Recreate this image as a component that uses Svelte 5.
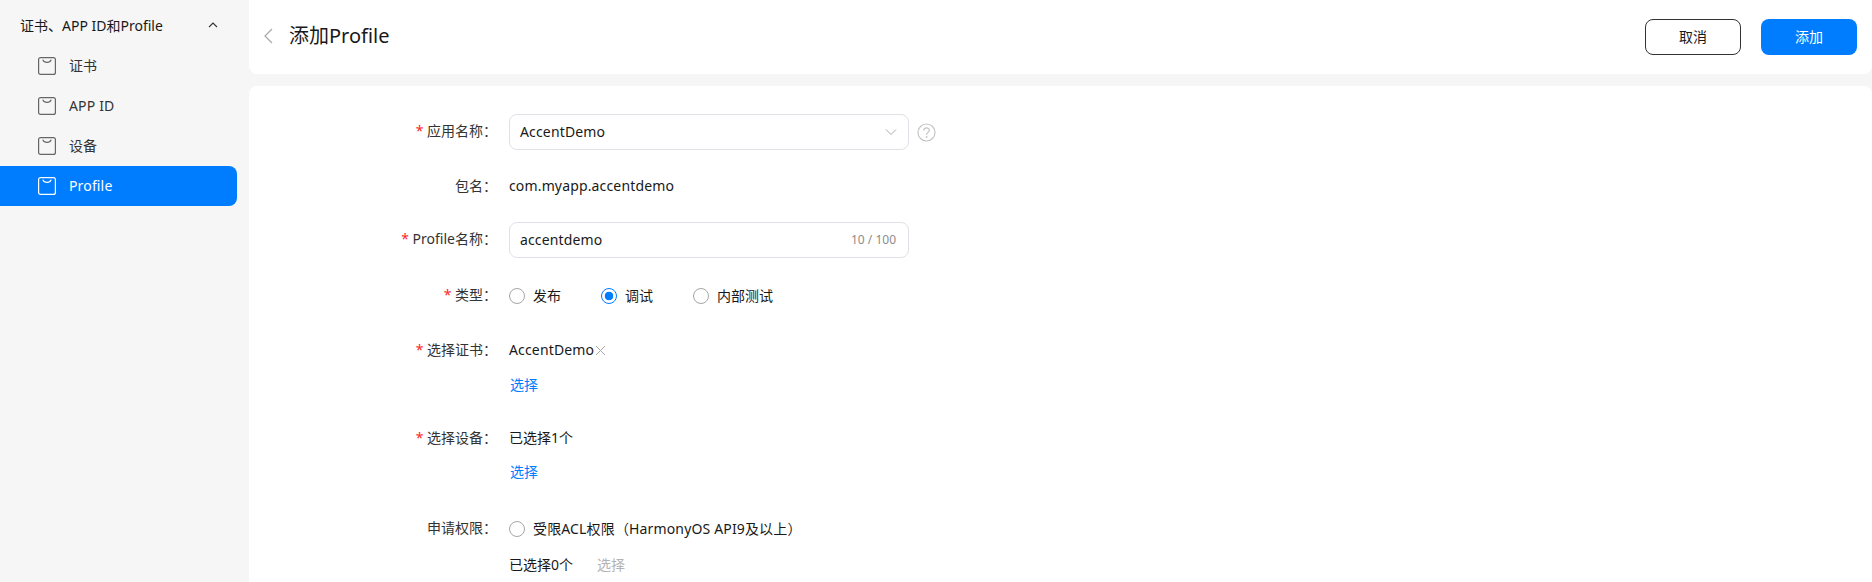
<script>
  const navItems = [
    { label: '证书' },
    { label: 'APP ID', latin: true },
    { label: '设备' },
    { label: 'Profile', active: true, latin: true }
  ];
</script>

<div class="page">
  <aside class="sidebar">
    <div class="group">
      <span>证书、APP ID和Profile</span>
      <svg class="caret" width="12" height="12" viewBox="0 0 12 12" fill="none"><path d="M2 8 6 4l4 4" stroke="#333" stroke-width="1.1"/></svg>
    </div>
    {#each navItems as item}
      <div class="nav" class:active={item.active}>
        <svg width="18" height="18" viewBox="0 0 18 18" fill="none">
          <rect x=".6" y=".6" width="16.8" height="16.8" rx="2" stroke="currentColor" class="box"/>
          <path d="M5 3c1 3.2 7 3.2 8 0" stroke="currentColor" stroke-width="1.1" stroke-linecap="round"/>
        </svg>
        <span class:latin={item.latin}>{item.label}</span>
      </div>
    {/each}
  </aside>

  <main class="main">
    <header class="head">
      <svg class="back" width="12" height="18" viewBox="0 0 12 18" fill="none"><path d="M10 2 3 9l7 7" stroke="#a8a8a8" stroke-width="1.2"/></svg>
      <h1>添加Profile</h1>
      <div class="spacer"></div>
      <button class="btn ghost">取消</button>
      <button class="btn primary">添加</button>
    </header>

    <section class="form">
      <div class="row r-select">
        <div class="label"><i>*</i> 应用名称：</div>
        <div class="field">
          <span class="latin">AccentDemo</span>
          <svg width="12" height="12" viewBox="0 0 12 12" fill="none"><path d="M1 3.5 6 8.5l5-5" stroke="#aaa" stroke-width="1"/></svg>
        </div>
        <svg class="help" width="19" height="19" viewBox="0 0 19 19" fill="none">
          <circle cx="9.5" cy="9.5" r="8.5" stroke="#c4c4c4" stroke-width="1.2"/>
          <path d="M6.9 7.4c0-3.3 5.4-3.3 5.4 0 0 2-2.7 2-2.7 4.3" stroke="#c4c4c4" stroke-width="1.2"/>
          <circle cx="9.6" cy="14" r=".9" fill="#c4c4c4"/>
        </svg>
      </div>

      <div class="row r-pkg">
        <div class="label">包名：</div>
        <div class="value latin">com.myapp.accentdemo</div>
      </div>

      <div class="row r-name">
        <div class="label"><i>*</i> Profile名称：</div>
        <div class="field">
          <span class="latin">accentdemo</span>
          <small>10 / 100</small>
        </div>
      </div>

      <div class="row r-type">
        <div class="label"><i>*</i> 类型：</div>
        <div class="radios">
          <label class="radio"><b></b>发布</label>
          <label class="radio on"><b></b>调试</label>
          <label class="radio"><b></b>内部测试</label>
        </div>
      </div>

      <div class="row r-cert">
        <div class="label"><i>*</i> 选择证书：</div>
        <div class="value"><span class="latin">AccentDemo</span><svg class="x" width="11" height="11" viewBox="0 0 11 11" fill="none"><path d="m1 1 9 9M10 1l-9 9" stroke="#a8a8a8"/></svg></div>
      </div>
      <div class="row sub"><div></div><a class="link" href="#a">选择</a></div>

      <div class="row r-dev">
        <div class="label"><i>*</i> 选择设备：</div>
        <div class="value">已选择1个</div>
      </div>
      <div class="row sub"><div></div><a class="link" href="#a">选择</a></div>

      <div class="row r-perm">
        <div class="label">申请权限：</div>
        <label class="radio"><b></b><span class="latin">受限ACL权限（HarmonyOS API9及以上）</span></label>
      </div>
      <div class="row sub2">
        <div></div>
        <div class="value">已选择0个<span class="muted">选择</span></div>
      </div>
    </section>
  </main>
</div>

<style>
  :global(body) {
    margin: 0;
    background: #f6f6f6;
  }
  .page {
    display: flex;
    height: 582px;
    overflow: hidden;
    background: #f6f6f6;
    color: #191919;
    font: 14px/24px "Noto Sans", "Noto Sans CJK SC", sans-serif;
  }
  .latin {
    letter-spacing: 0.15px;
  }
  .sidebar {
    flex: 0 0 237px;
    margin-right: 12px;
  }
  .group {
    display: flex;
    align-items: center;
    justify-content: space-between;
    height: 46px;
    padding: 6px 15px 0 20px;
    box-sizing: border-box;
  }
  .caret {
    margin-top: -2px;
    margin-right: 3px;
  }
  .nav {
    display: flex;
    align-items: center;
    gap: 13px;
    height: 40px;
    padding-left: 38px;
    color: #666;
    border-radius: 0 8px 8px 0;
  }
  .nav span {
    color: #333;
  }
  .nav.active {
    background: #007dff;
    color: #fff;
  }
  .nav.active span {
    color: #fff;
  }
  .box {
    stroke-width: 1.2;
  }
  .main {
    flex: 1;
    display: flex;
    flex-direction: column;
    gap: 12px;
    min-width: 0;
  }
  .head {
    display: flex;
    align-items: center;
    height: 74px;
    flex: none;
    padding: 0 15px 2px 13px;
    box-sizing: border-box;
    background: #fff;
    border-radius: 0 0 8px 8px;
  }
  .back {
    margin-right: 15px;
  }
  h1 {
    margin: 0;
    font-size: 20px;
    font-weight: 400;
    line-height: 28px;
    color: #191919;
  }
  .spacer {
    flex: 1;
  }
  .btn {
    width: 96px;
    height: 36px;
    margin-top: 2px;
    margin-left: 20px;
    font: inherit;
    border-radius: 8px;
    box-sizing: border-box;
    padding: 0;
  }
  .ghost {
    background: #fff;
    border: 1px solid #333;
    color: #191919;
  }
  .primary {
    background: #007dff;
    border: none;
    color: #fff;
  }
  .form {
    flex: 1;
    background: #fff;
    border-radius: 8px 8px 0 0;
    padding-top: 28px;
  }
  .row {
    display: grid;
    grid-template-columns: 248px 400px auto;
    column-gap: 12px;
    align-items: center;
    justify-content: start;
    margin-bottom: 24px;
  }
  .label {
    text-align: right;
    color: #333;
  }
  .r-select .label,
  .r-name .label,
  .r-type .label,
  .r-perm .label {
    margin-bottom: 2px;
  }
  .label i {
    color: #fa2a2d;
    font-style: normal;
  }
  .field {
    display: flex;
    align-items: center;
    justify-content: space-between;
    height: 36px;
    padding: 0 11px 0 10px;
    box-sizing: border-box;
    border: 1px solid #e0e1e6;
    border-radius: 8px;
  }
  .field small {
    font-size: 12px;
    color: #8c8c8c;
    margin-right: 1px;
  }
  .help {
    margin-left: -4px;
  }
  .r-name { margin-bottom: 25px; }
  .r-cert { margin-top: 29px; margin-bottom: 11px; }
  .r-dev { margin-top: 29px; margin-bottom: 10px; }
  .r-perm { margin-top: 32px; margin-bottom: 11px; }
  .r-type { margin-bottom: 0; }
  .sub { margin-bottom: 0; }
  .radios {
    display: flex;
    gap: 40px;
  }
  .radio {
    display: inline-flex;
    align-items: center;
    gap: 8px;
    white-space: nowrap;
    font-size: 14px;
  }
  .radio b {
    display: block;
    width: 16px;
    height: 16px;
    box-sizing: border-box;
    border: 1px solid #a6a6a6;
    border-radius: 50%;
  }
  .radio.on b {
    border-color: #007dff;
    background: radial-gradient(circle, #007dff 0 4px, #fff 4.6px);
  }
  .value {
    display: flex;
    align-items: center;
  }
  .x {
    margin-left: 1px;
  }
  .link {
    color: #007dff;
    text-decoration: none;
    margin-left: 1px;
  }
  .muted {
    color: #b3b3b3;
    margin-left: 24px;
  }
</style>
